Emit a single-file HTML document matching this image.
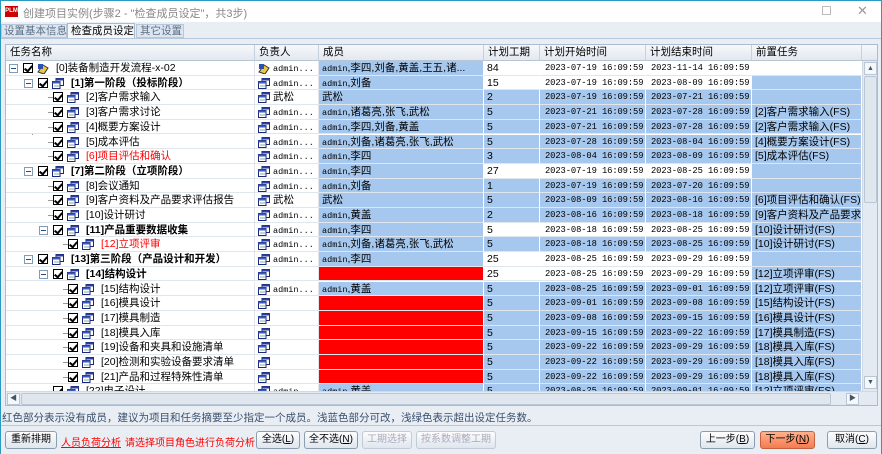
<!DOCTYPE html>
<html><head><meta charset="utf-8">
<style>
*{margin:0;padding:0;box-sizing:border-box}
body{width:882px;height:454px;overflow:hidden;background:#e9eef4;font-family:"Liberation Sans","Noto Sans CJK SC",sans-serif;font-size:10.5px;color:#000;position:relative}
.abs{position:absolute;white-space:nowrap}
#title{left:0;top:0;width:882px;height:22px;background:#fff;border:1px solid #2a9ac0;border-bottom:none}
#title .t{left:22px;top:4px;color:#888;font-size:11px}
#grid{left:5px;top:44px;width:873px;height:362px;background:#fff;border:1px solid #a9bdd2;overflow:hidden}
.hd{position:absolute;top:0;height:16px;background:linear-gradient(#f6f8fb,#e3e9f0);border-right:1px solid #c5d1de;border-bottom:1px solid #b7c5d4;padding-left:4px;line-height:15px;font-size:10.5px}
.r{position:absolute;left:0;height:15px;width:856px}
.c{position:absolute;top:0;height:14.7px;line-height:14px;white-space:nowrap;overflow:hidden;border-right:1px solid #fff;border-bottom:1px solid #dfe6ee;padding-left:3px}
.n{left:0;width:249px;background:#fff;border-right:1px solid #e2e6ea}
.f{left:249px;width:64px;background:#fff;border-right:1px solid #e2e6ea}
.m{left:313px;width:165px;background:#a6c8ef}
.g{left:478px;width:56px;background:#a6c8ef}
.s,.e{width:106px;background:#a6c8ef;font-family:"Liberation Mono",monospace;font-size:8.8px;padding-left:5px;letter-spacing:-0.1px}
.s{left:534px}.e{left:640px}
.p{left:746px;width:110px;background:#a6c8ef}
.w{background:#fff}
.red{background:#ff0000}
.adm{font-family:"Liberation Mono",monospace;font-size:8.5px}
.cb{position:absolute;top:2px;width:10px;height:10px;border:1px solid #000;background:#fff}
.cb:after{content:"";position:absolute;left:2px;top:0px;width:3px;height:6px;border:solid #000;border-width:0 2px 2px 0;transform:rotate(40deg)}
.ic{position:absolute;top:2px;width:12px;height:11px}
.tx{position:absolute;top:0;line-height:15px}
.ex{position:absolute;top:3px;width:9px;height:9px;border:1px solid #7f9db9;background:#fff}
.ex:after{content:"";position:absolute;left:1px;top:3px;width:5px;height:1px;background:#2b4b7f}
.b{font-weight:bold}
.rt{color:#f00}
.vl{position:absolute;width:0;border-left:1px dotted #999}
.hl{position:absolute;height:0;width:8px;border-top:1px solid #999;top:7px}
.btn{position:absolute;top:431px;height:18px;border:1px solid #8d9db0;border-radius:3px;background:linear-gradient(#fdfdfe,#dfe6ee);font-size:10px;line-height:16px;text-align:center;white-space:nowrap;overflow:hidden}
.dis{color:#aab;border-color:#c2cbd6}
</style></head><body>
<div id="title" class="abs">
 <div class="abs" style="left:4px;top:5px;width:13px;height:11px;background:#c00;color:#fff;font-size:6px;line-height:11px;text-align:center;font-weight:bold">PLM</div>
 <div class="abs t">创建项目实例(步骤2 - "检查成员设定"，共3步)</div>
 <div class="abs" style="left:820px;top:3px;color:#999;font-size:12px">☐</div>
 <div class="abs" style="left:856px;top:2px;color:#999;font-size:13px">✕</div>
</div>
<div class="abs" style="left:0;top:22px;width:882px;height:432px;border-left:1px solid #2a9ac0;border-right:1px solid #2a9ac0"></div>
<div class="abs" style="left:1px;top:24px;width:66px;height:14px;color:#5a6f86;line-height:13px;padding-left:2px;background:#dde6f0;border:1px solid #b9c8d8;font-size:10.5px">设置基本信息</div>
<div class="abs" style="left:67px;top:23px;width:68px;height:16px;line-height:15px;padding-left:3px;background:#f4f7fa;border:1px solid #a9bccf;border-bottom:none;font-size:10.5px">检查成员设定</div>
<div class="abs" style="left:136px;top:24px;width:48px;height:14px;color:#5a6f86;line-height:13px;padding-left:3px;background:#dde6f0;border:1px solid #b9c8d8;font-size:10.5px">其它设置</div>
<div class="abs" style="left:1px;top:38px;width:880px;height:1px;background:#b9c8d8"></div>

<div id="grid" class="abs">
 <div class="hd" style="left:0;width:249px">任务名称</div>
 <div class="hd" style="left:249px;width:64px">负责人</div>
 <div class="hd" style="left:313px;width:165px">成员</div>
 <div class="hd" style="left:478px;width:56px">计划工期</div>
 <div class="hd" style="left:534px;width:106px">计划开始时间</div>
 <div class="hd" style="left:640px;width:106px">计划结束时间</div>
 <div class="hd" style="left:746px;width:110px">前置任务</div>
 <div class="hd" style="left:856px;width:17px;border-right:none"></div>
 <div id="rows" style="position:absolute;left:0;top:16px;width:856px;height:346px">
<svg width="0" height="0" style="position:absolute"><defs>
<g id="win"><rect x="4" y="0.5" width="7.5" height="7" fill="#fff" stroke="#1a2a7a"/><rect x="4" y="0.5" width="7.5" height="2" fill="#2a3e9a"/><rect x="0.5" y="3.5" width="7.5" height="7" fill="#fff" stroke="#1a2a7a"/><rect x="0.5" y="3.5" width="7.5" height="2" fill="#3a5ac0"/><line x1="2" y1="8" x2="7" y2="8" stroke="#8aa"/></g>
<g id="prj"><path d="M1 9 L6 2 L11 5 L7 11 Z" fill="#e8c840" stroke="#333"/><rect x="1" y="1" width="5" height="5" fill="#3050b0"/></g>
</defs></svg>
<div class="vl" style="left:26px;top:14px;height:332px"></div>
<div class="vl" style="left:41px;top:29px;height:80px"></div>
<div class="vl" style="left:41px;top:132px;height:81px"></div>
<div class="vl" style="left:56px;top:190px;height:22px"></div>
<div class="vl" style="left:41px;top:235px;height:111px"></div>
<div class="vl" style="left:56px;top:250px;height:110px"></div>

<div class="r" style="top:0px"><div class="c n"><div class="ex" style="left:3px"></div><div class="cb" style="left:17px"></div><svg class="ic" style="left:31px"><use href="#prj"/></svg><div class="tx" style="left:50px">[0]装备制造开发流程-x-02</div></div><div class="c f"><svg class="ic" style="left:3px"><use href="#prj"/></svg><span class="adm" style="margin-left:15px">admin...</span></div><div class="c m"><span class="adm">admin</span>,李四,刘备,黄盖,王五,诸...</div><div class="c g w">84</div><div class="c s w">2023-07-19 16:09:59</div><div class="c e w">2023-11-14 16:09:59</div><div class="c p w"></div></div>
<div class="r" style="top:14.7px"><div class="c n"><div class="ex" style="left:18px"></div><div class="cb" style="left:32px"></div><svg class="ic" style="left:46px"><use href="#win"/></svg><div class="tx b" style="left:65px">[1]第一阶段（投标阶段）</div></div><div class="c f"><svg class="ic" style="left:3px"><use href="#win"/></svg><span class="adm" style="margin-left:15px">admin...</span></div><div class="c m"><span class="adm">admin</span>,刘备</div><div class="c g w">15</div><div class="c s w">2023-07-19 16:09:59</div><div class="c e w">2023-08-09 16:09:59</div><div class="c p"></div></div>
<div class="r" style="top:29.4px"><div class="c n"><div class="hl" style="left:42px"></div><div class="cb" style="left:47px"></div><svg class="ic" style="left:61px"><use href="#win"/></svg><div class="tx" style="left:80px">[2]客户需求输入</div></div><div class="c f"><svg class="ic" style="left:3px"><use href="#win"/></svg><span style="margin-left:15px">武松</span></div><div class="c m">武松</div><div class="c g">2</div><div class="c s">2023-07-19 16:09:59</div><div class="c e">2023-07-21 16:09:59</div><div class="c p"></div></div>
<div class="r" style="top:44.1px"><div class="c n"><div class="hl" style="left:42px"></div><div class="cb" style="left:47px"></div><svg class="ic" style="left:61px"><use href="#win"/></svg><div class="tx" style="left:80px">[3]客户需求讨论</div></div><div class="c f"><svg class="ic" style="left:3px"><use href="#win"/></svg><span class="adm" style="margin-left:15px">admin...</span></div><div class="c m"><span class="adm">admin</span>,诸葛亮,张飞,武松</div><div class="c g">5</div><div class="c s">2023-07-21 16:09:59</div><div class="c e">2023-07-28 16:09:59</div><div class="c p">[2]客户需求输入(FS)</div></div>
<div class="r" style="top:58.8px"><div class="c n"><div class="hl" style="left:42px"></div><div class="cb" style="left:47px"></div><svg class="ic" style="left:61px"><use href="#win"/></svg><div class="tx" style="left:80px">[4]概要方案设计</div></div><div class="c f"><svg class="ic" style="left:3px"><use href="#win"/></svg><span class="adm" style="margin-left:15px">admin...</span></div><div class="c m"><span class="adm">admin</span>,李四,刘备,黄盖</div><div class="c g">5</div><div class="c s">2023-07-21 16:09:59</div><div class="c e">2023-07-28 16:09:59</div><div class="c p">[2]客户需求输入(FS)</div></div>
<div class="r" style="top:73.5px"><div class="c n"><div class="hl" style="left:42px"></div><div class="cb" style="left:47px"></div><svg class="ic" style="left:61px"><use href="#win"/></svg><div class="tx" style="left:80px">[5]成本评估</div></div><div class="c f"><svg class="ic" style="left:3px"><use href="#win"/></svg><span class="adm" style="margin-left:15px">admin...</span></div><div class="c m"><span class="adm">admin</span>,刘备,诸葛亮,张飞,武松</div><div class="c g">5</div><div class="c s">2023-07-28 16:09:59</div><div class="c e">2023-08-04 16:09:59</div><div class="c p">[4]概要方案设计(FS)</div></div>
<div class="r" style="top:88.2px"><div class="c n"><div class="hl" style="left:42px"></div><div class="cb" style="left:47px"></div><svg class="ic" style="left:61px"><use href="#win"/></svg><div class="tx rt" style="left:80px">[6]项目评估和确认</div></div><div class="c f"><svg class="ic" style="left:3px"><use href="#win"/></svg><span class="adm" style="margin-left:15px">admin...</span></div><div class="c m"><span class="adm">admin</span>,李四</div><div class="c g">3</div><div class="c s">2023-08-04 16:09:59</div><div class="c e">2023-08-09 16:09:59</div><div class="c p">[5]成本评估(FS)</div></div>
<div class="r" style="top:102.9px"><div class="c n"><div class="ex" style="left:18px"></div><div class="cb" style="left:32px"></div><svg class="ic" style="left:46px"><use href="#win"/></svg><div class="tx b" style="left:65px">[7]第二阶段（立项阶段）</div></div><div class="c f"><svg class="ic" style="left:3px"><use href="#win"/></svg><span class="adm" style="margin-left:15px">admin...</span></div><div class="c m"><span class="adm">admin</span>,李四</div><div class="c g w">27</div><div class="c s w">2023-07-19 16:09:59</div><div class="c e w">2023-08-25 16:09:59</div><div class="c p"></div></div>
<div class="r" style="top:117.6px"><div class="c n"><div class="hl" style="left:42px"></div><div class="cb" style="left:47px"></div><svg class="ic" style="left:61px"><use href="#win"/></svg><div class="tx" style="left:80px">[8]会议通知</div></div><div class="c f"><svg class="ic" style="left:3px"><use href="#win"/></svg><span class="adm" style="margin-left:15px">admin...</span></div><div class="c m"><span class="adm">admin</span>,刘备</div><div class="c g">1</div><div class="c s">2023-07-19 16:09:59</div><div class="c e">2023-07-20 16:09:59</div><div class="c p"></div></div>
<div class="r" style="top:132.3px"><div class="c n"><div class="hl" style="left:42px"></div><div class="cb" style="left:47px"></div><svg class="ic" style="left:61px"><use href="#win"/></svg><div class="tx" style="left:80px">[9]客户资料及产品要求评估报告</div></div><div class="c f"><svg class="ic" style="left:3px"><use href="#win"/></svg><span style="margin-left:15px">武松</span></div><div class="c m">武松</div><div class="c g">5</div><div class="c s">2023-08-09 16:09:59</div><div class="c e">2023-08-16 16:09:59</div><div class="c p">[6]项目评估和确认(FS)</div></div>
<div class="r" style="top:147px"><div class="c n"><div class="hl" style="left:42px"></div><div class="cb" style="left:47px"></div><svg class="ic" style="left:61px"><use href="#win"/></svg><div class="tx" style="left:80px">[10]设计研讨</div></div><div class="c f"><svg class="ic" style="left:3px"><use href="#win"/></svg><span class="adm" style="margin-left:15px">admin...</span></div><div class="c m"><span class="adm">admin</span>,黄盖</div><div class="c g">2</div><div class="c s">2023-08-16 16:09:59</div><div class="c e">2023-08-18 16:09:59</div><div class="c p">[9]客户资料及产品要求</div></div>
<div class="r" style="top:161.7px"><div class="c n"><div class="ex" style="left:33px"></div><div class="cb" style="left:47px"></div><svg class="ic" style="left:61px"><use href="#win"/></svg><div class="tx b" style="left:80px">[11]产品重要数据收集</div></div><div class="c f"><svg class="ic" style="left:3px"><use href="#win"/></svg><span class="adm" style="margin-left:15px">admin...</span></div><div class="c m"><span class="adm">admin</span>,李四</div><div class="c g w">5</div><div class="c s w">2023-08-18 16:09:59</div><div class="c e w">2023-08-25 16:09:59</div><div class="c p">[10]设计研讨(FS)</div></div>
<div class="r" style="top:176.4px"><div class="c n"><div class="hl" style="left:57px"></div><div class="cb" style="left:62px"></div><svg class="ic" style="left:76px"><use href="#win"/></svg><div class="tx rt" style="left:95px">[12]立项评审</div></div><div class="c f"><svg class="ic" style="left:3px"><use href="#win"/></svg><span class="adm" style="margin-left:15px">admin...</span></div><div class="c m"><span class="adm">admin</span>,刘备,诸葛亮,张飞,武松</div><div class="c g">5</div><div class="c s">2023-08-18 16:09:59</div><div class="c e">2023-08-25 16:09:59</div><div class="c p">[10]设计研讨(FS)</div></div>
<div class="r" style="top:191.1px"><div class="c n"><div class="ex" style="left:18px"></div><div class="cb" style="left:32px"></div><svg class="ic" style="left:46px"><use href="#win"/></svg><div class="tx b" style="left:65px">[13]第三阶段（产品设计和开发）</div></div><div class="c f"><svg class="ic" style="left:3px"><use href="#win"/></svg><span class="adm" style="margin-left:15px">admin...</span></div><div class="c m"><span class="adm">admin</span>,李四</div><div class="c g w">25</div><div class="c s w">2023-08-25 16:09:59</div><div class="c e w">2023-09-29 16:09:59</div><div class="c p"></div></div>
<div class="r" style="top:205.8px"><div class="c n"><div class="ex" style="left:33px"></div><div class="cb" style="left:47px"></div><svg class="ic" style="left:61px"><use href="#win"/></svg><div class="tx b" style="left:80px">[14]结构设计</div></div><div class="c f"><svg class="ic" style="left:3px"><use href="#win"/></svg></div><div class="c m red"></div><div class="c g w">25</div><div class="c s w">2023-08-25 16:09:59</div><div class="c e w">2023-09-29 16:09:59</div><div class="c p">[12]立项评审(FS)</div></div>
<div class="r" style="top:220.5px"><div class="c n"><div class="hl" style="left:57px"></div><div class="cb" style="left:62px"></div><svg class="ic" style="left:76px"><use href="#win"/></svg><div class="tx" style="left:95px">[15]结构设计</div></div><div class="c f"><svg class="ic" style="left:3px"><use href="#win"/></svg><span class="adm" style="margin-left:15px">admin...</span></div><div class="c m"><span class="adm">admin</span>,黄盖</div><div class="c g">5</div><div class="c s">2023-08-25 16:09:59</div><div class="c e">2023-09-01 16:09:59</div><div class="c p">[12]立项评审(FS)</div></div>
<div class="r" style="top:235.2px"><div class="c n"><div class="hl" style="left:57px"></div><div class="cb" style="left:62px"></div><svg class="ic" style="left:76px"><use href="#win"/></svg><div class="tx" style="left:95px">[16]模具设计</div></div><div class="c f"><svg class="ic" style="left:3px"><use href="#win"/></svg></div><div class="c m red"></div><div class="c g">5</div><div class="c s">2023-09-01 16:09:59</div><div class="c e">2023-09-08 16:09:59</div><div class="c p">[15]结构设计(FS)</div></div>
<div class="r" style="top:249.9px"><div class="c n"><div class="hl" style="left:57px"></div><div class="cb" style="left:62px"></div><svg class="ic" style="left:76px"><use href="#win"/></svg><div class="tx" style="left:95px">[17]模具制造</div></div><div class="c f"><svg class="ic" style="left:3px"><use href="#win"/></svg></div><div class="c m red"></div><div class="c g">5</div><div class="c s">2023-09-08 16:09:59</div><div class="c e">2023-09-15 16:09:59</div><div class="c p">[16]模具设计(FS)</div></div>
<div class="r" style="top:264.6px"><div class="c n"><div class="hl" style="left:57px"></div><div class="cb" style="left:62px"></div><svg class="ic" style="left:76px"><use href="#win"/></svg><div class="tx" style="left:95px">[18]模具入库</div></div><div class="c f"><svg class="ic" style="left:3px"><use href="#win"/></svg></div><div class="c m red"></div><div class="c g">5</div><div class="c s">2023-09-15 16:09:59</div><div class="c e">2023-09-22 16:09:59</div><div class="c p">[17]模具制造(FS)</div></div>
<div class="r" style="top:279.3px"><div class="c n"><div class="hl" style="left:57px"></div><div class="cb" style="left:62px"></div><svg class="ic" style="left:76px"><use href="#win"/></svg><div class="tx" style="left:95px">[19]设备和夹具和设施清单</div></div><div class="c f"><svg class="ic" style="left:3px"><use href="#win"/></svg></div><div class="c m red"></div><div class="c g">5</div><div class="c s">2023-09-22 16:09:59</div><div class="c e">2023-09-29 16:09:59</div><div class="c p">[18]模具入库(FS)</div></div>
<div class="r" style="top:294px"><div class="c n"><div class="hl" style="left:57px"></div><div class="cb" style="left:62px"></div><svg class="ic" style="left:76px"><use href="#win"/></svg><div class="tx" style="left:95px">[20]检测和实验设备要求清单</div></div><div class="c f"><svg class="ic" style="left:3px"><use href="#win"/></svg></div><div class="c m red"></div><div class="c g">5</div><div class="c s">2023-09-22 16:09:59</div><div class="c e">2023-09-29 16:09:59</div><div class="c p">[18]模具入库(FS)</div></div>
<div class="r" style="top:308.7px"><div class="c n"><div class="hl" style="left:57px"></div><div class="cb" style="left:62px"></div><svg class="ic" style="left:76px"><use href="#win"/></svg><div class="tx" style="left:95px">[21]产品和过程特殊性清单</div></div><div class="c f"><svg class="ic" style="left:3px"><use href="#win"/></svg></div><div class="c m red"></div><div class="c g">5</div><div class="c s">2023-09-22 16:09:59</div><div class="c e">2023-09-29 16:09:59</div><div class="c p">[18]模具入库(FS)</div></div>
<div class="r" style="top:323.4px"><div class="c n"><div class="hl" style="left:42px"></div><div class="cb" style="left:47px"></div><svg class="ic" style="left:61px"><use href="#win"/></svg><div class="tx" style="left:80px">[22]电子设计</div></div><div class="c f"><svg class="ic" style="left:3px"><use href="#win"/></svg><span class="adm" style="margin-left:15px">admin...</span></div><div class="c m"><span class="adm">admin</span>,黄盖</div><div class="c g">5</div><div class="c s">2023-08-25 16:09:59</div><div class="c e">2023-09-01 16:09:59</div><div class="c p">[12]立项评审(FS)</div></div>
 </div>
 <div class="abs" style="left:856px;top:16px;width:16px;height:330px;background:#e4eaf1;border-left:1px solid #d0d9e3">
  <div class="abs" style="left:1px;top:1px;width:13px;height:13px;background:#f5f8fb;border:1px solid #b8c6d6;font-size:7px;text-align:center;line-height:11px;color:#456">▲</div>
  <div class="abs" style="left:1px;top:15px;width:13px;height:127px;background:#dfe6ee;border:1px solid #b8c6d6;border-radius:2px"></div>
  <div class="abs" style="left:1px;top:315px;width:13px;height:13px;background:#f5f8fb;border:1px solid #b8c6d6;font-size:7px;text-align:center;line-height:11px;color:#456">▼</div>
 </div>
 <div class="abs" style="left:0;top:346px;width:872px;height:15px;background:#e4eaf1;border-top:1px solid #d0d9e3">
  <div class="abs" style="left:1px;top:1px;width:13px;height:12px;background:#f5f8fb;border:1px solid #b8c6d6;font-size:7px;text-align:center;line-height:10px;color:#456">◀</div>
  <div class="abs" style="left:15px;top:1px;width:810px;height:12px;background:#dfe6ee;border:1px solid #b8c6d6;border-radius:2px"></div>
  <div class="abs" style="left:840px;top:1px;width:13px;height:12px;background:#f5f8fb;border:1px solid #b8c6d6;font-size:7px;text-align:center;line-height:10px;color:#456">▶</div>
 </div>
</div>

<div class="abs" style="left:2px;top:410px;color:#3a4f6a;font-size:10.5px">红色部分表示没有成员，建议为项目和任务摘要至少指定一个成员。浅蓝色部分可改，浅绿色表示超出设定任务数。</div>
<div class="abs" style="left:1px;top:425px;width:880px;height:1px;background:#b9c8d8"></div>

<div class="btn" style="left:5px;width:52px">重新排期</div>
<div class="abs" style="left:61px;top:434px;color:#f00;text-decoration:underline;font-size:10px">人员负荷分析</div>
<div class="abs" style="left:125px;top:434px;color:#f00;font-size:10px">请选择项目角色进行负荷分析</div>
<div class="btn" style="left:256px;width:44px">全选(<u>L</u>)</div>
<div class="btn" style="left:304px;width:54px">全不选(<u>N</u>)</div>
<div class="btn dis" style="left:362px;width:50px">工期选择</div>
<div class="btn dis" style="left:416px;width:80px">按系数调整工期</div>
<div class="btn" style="left:700px;width:55px">上一步(<u>B</u>)</div>
<div class="btn" style="left:760px;width:55px;background:linear-gradient(#ffb08c,#f47c50);border-color:#c76040">下一步(<u>N</u>)</div>
<div class="btn" style="left:827px;width:50px">取消(<u>C</u>)</div>
</body></html>
